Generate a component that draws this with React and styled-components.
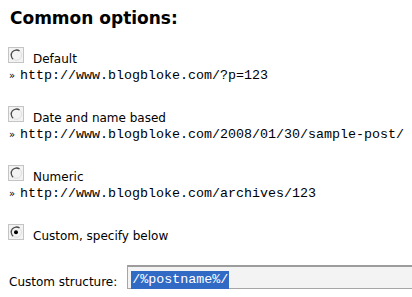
import styled, { createGlobalStyle } from "styled-components";

const GlobalStyle = createGlobalStyle`
  html, body {
    margin: 0;
    padding: 0;
    background: #ffffff;
  }
  body {
    font-family: "DejaVu Sans", Verdana, sans-serif;
    color: #000000;
    overflow: hidden;
  }
`;

const options = [
  { label: "Default", url: "http://www.blogbloke.com/?p=123" },
  {
    label: "Date and name based",
    url: "http://www.blogbloke.com/2008/01/30/sample-post/",
  },
  { label: "Numeric", url: "http://www.blogbloke.com/archives/123" },
  { label: "Custom, specify below", checked: true },
];

const RadioIcon = ({ checked }) => (
  <RadioBox width="16" height="16" viewBox="0 0 16 16">
    <rect x="0.5" y="0.5" width="15" height="15" fill="#f3f3f3" stroke="#c4c4c4" />
    <path
      d="M5.2 12.2 A5 5 0 0 1 11.6 4.1"
      fill="none"
      stroke="#4a4a4a"
      strokeWidth="1.3"
    />
    <path
      d="M11.6 4.1 A5 5 0 0 1 5.2 12.2"
      fill="none"
      stroke="#dedede"
      strokeWidth="1"
    />
    {checked && <circle cx="8" cy="8.2" r="2" fill="#000000" />}
  </RadioBox>
);

const App = () => {
  return (
    <Page>
      <GlobalStyle />
      <Heading>Common options:</Heading>
      {options.map((opt) => (
        <Option key={opt.label}>
          <OptionRow>
            <RadioIcon checked={opt.checked} />
            <Label>{opt.label}</Label>
          </OptionRow>
          {opt.url && (
            <Example>
              <Raquo>»</Raquo>
              {opt.url}
            </Example>
          )}
        </Option>
      ))}
      <CustomRow>
        <Label>Custom structure:</Label>
        <Field>
          <Selected>/%postname%/</Selected>
        </Field>
      </CustomRow>
    </Page>
  );
};

const Page = styled.div`
  padding: 7px 0 0 8px;
  width: 404px;
  overflow: hidden;
`;

const Heading = styled.h3`
  margin: 0 0 18px 2px;
  font-family: "DejaVu Sans", Verdana, sans-serif;
  font-weight: bold;
  font-size: 17px;
  line-height: 22px;
  color: #000000;
`;

const Option = styled.div`
  margin-bottom: 22px;

  &:last-of-type {
    margin-bottom: 19px;
  }
`;

const OptionRow = styled.div`
  display: flex;
  align-items: flex-start;
  gap: 9px;
  height: 19px;
`;

const RadioBox = styled.svg`
  display: block;
  flex: none;
`;

const Label = styled.span`
  font-size: 12px;
  line-height: 14px;
  padding-top: 5px;
  white-space: nowrap;
`;

const Example = styled.div`
  margin-top: 2px;
  margin-left: 1px;
  font-family: "Liberation Mono", "Courier New", monospace;
  font-size: 13.33px;
  line-height: 16px;
  white-space: nowrap;
  color: #000000;
`;

const Raquo = styled.span`
  display: inline-block;
  width: 11px;
  font-family: "DejaVu Sans", Verdana, sans-serif;
  font-size: 10px;
`;

const CustomRow = styled.div`
  display: flex;
  align-items: flex-end;
  gap: 10px;
  margin-left: 1px;

  ${Label} {
    padding-top: 0;
  }
`;

const Field = styled.div`
  flex: 1;
  height: 19px;
  padding: 1px 0 1px 3px;
  border: 1px solid #a6a6a6;
  border-top: 2px solid #9c9c9c;
  border-right: none;
  background: #f3f3f3;
`;

const Selected = styled.span`
  display: inline-block;
  height: 18px;
  line-height: 18px;
  padding: 0 1px;
  background: #316ac5;
  color: #ffffff;
  font-family: "Liberation Mono", "Courier New", monospace;
  font-size: 13.33px;
`;

export default App;
